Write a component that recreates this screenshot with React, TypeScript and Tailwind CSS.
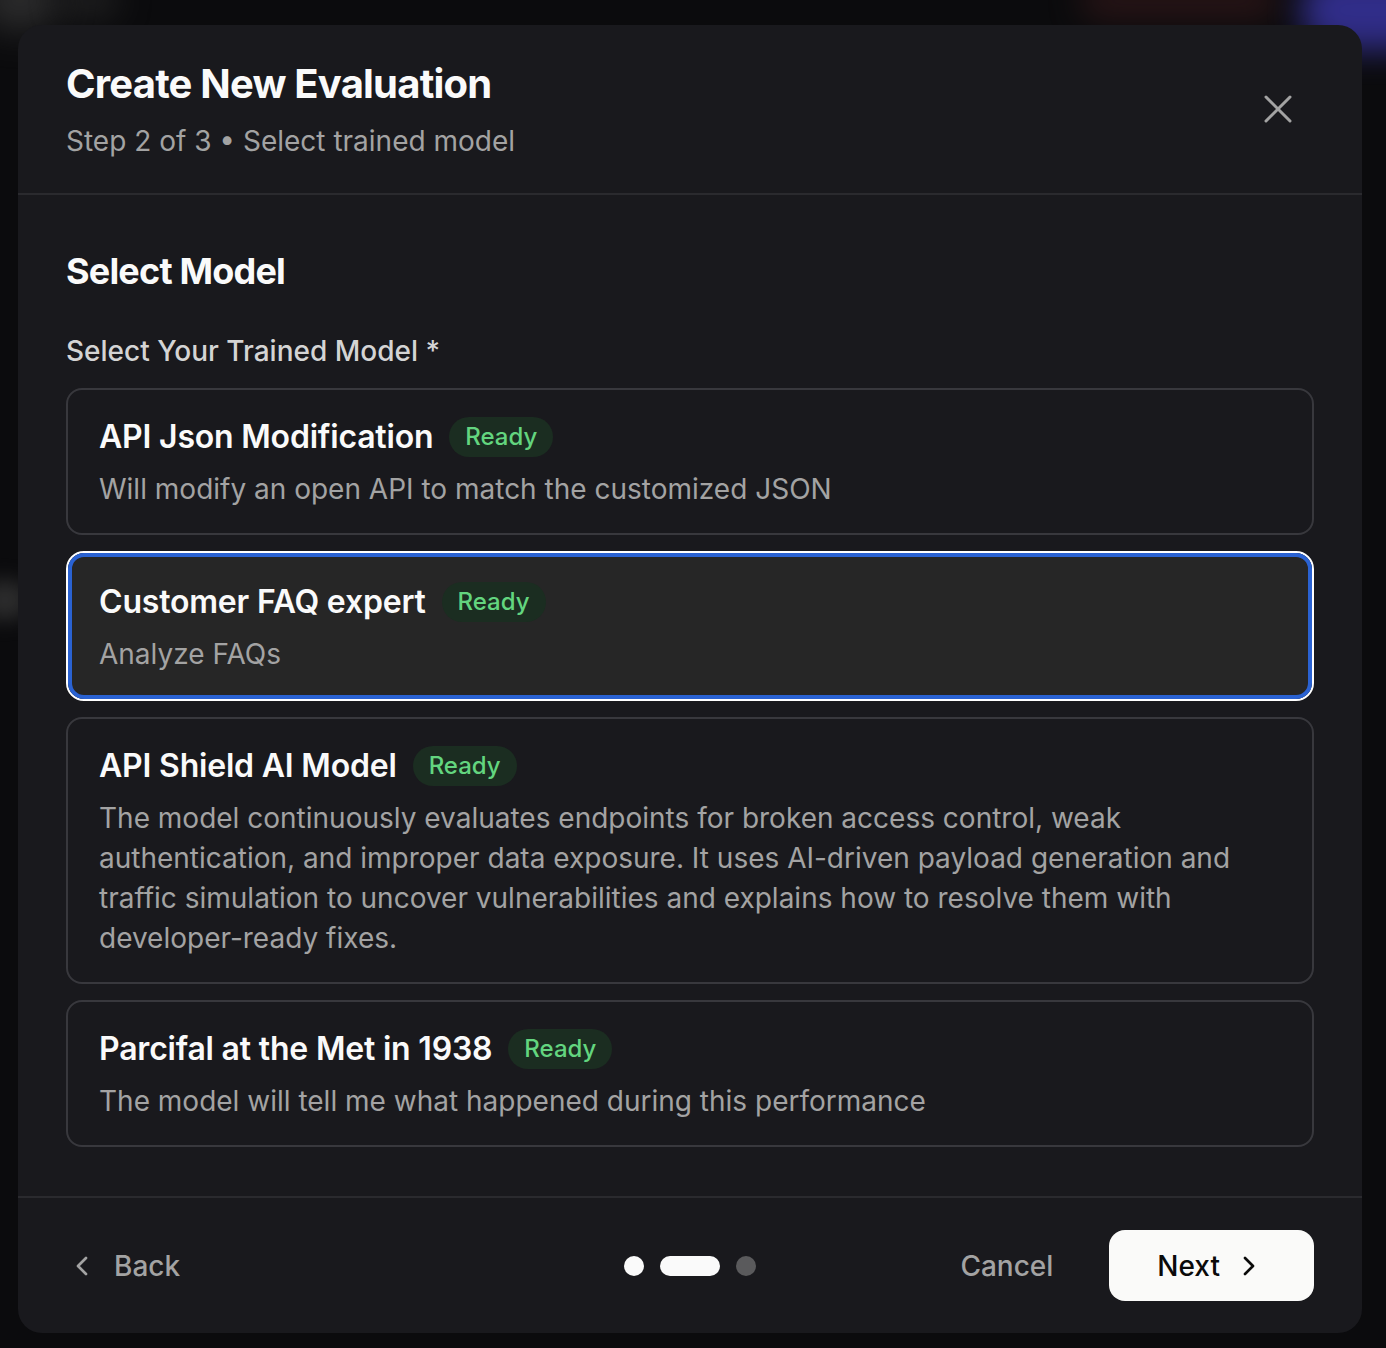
import React from "react";
import { X, ChevronLeft, ChevronRight } from "lucide-react";

type Model = { name: string; desc: string; selected?: boolean };

const models: Model[] = [
  { name: "API Json Modification", desc: "Will modify an open API to match the customized JSON" },
  { name: "Customer FAQ expert", desc: "Analyze FAQs", selected: true },
  {
    name: "API Shield AI Model",
    desc: "The model continuously evaluates endpoints for broken access control, weak authentication, and improper data exposure. It uses AI-driven payload generation and traffic simulation to uncover vulnerabilities and explains how to resolve them with developer-ready fixes.",
  },
  { name: "Parcifal at the Met in 1938", desc: "The model will tell me what happened during this performance" },
];

function CardContent({ m }: { m: Model }) {
  return (
    <>
      <div className="flex items-center gap-[16px]">
        <span className="text-[32px] leading-[40px] font-semibold text-[#fafafa] tracking-[-0.2px]">{m.name}</span>
        <span className="rounded-full bg-[#1b2d21] px-[16px] text-[24px] leading-[40px] font-medium text-[#63d57f]">
          Ready
        </span>
      </div>
      <p className="mt-[12px] text-[28px] leading-[40px] text-[#a3a3a3]">{m.desc}</p>
    </>
  );
}

function ModelCard({ m }: { m: Model }) {
  if (m.selected) {
    return (
      <div className="rounded-[18px] border-[2px] border-[#ffffff]">
        <div className="rounded-[16px] border-[4px] border-[#2a62d2] bg-[#262626] px-[27px] pt-[25px] pb-[21px]">
          <CardContent m={m} />
        </div>
      </div>
    );
  }
  return (
    <div className="rounded-[16px] border-[2px] border-[#38383d] px-[31px] pt-[27px] pb-[24px]">
      <CardContent m={m} />
    </div>
  );
}

export default function App() {
  return (
    <div
      className="relative w-[1386px] h-[1348px] overflow-hidden bg-[#0b0b0d]"
      style={{ fontFamily: "Inter, 'Noto Sans', sans-serif" }}
    >
      {/* blurred background remnants */}
      <div className="absolute -left-[20px] -top-[30px] h-[60px] w-[80px] rounded-full bg-[#3a3a3a] blur-[18px] opacity-70" />
      <div className="absolute left-[60px] -top-[20px] h-[40px] w-[60px] rounded-full bg-[#2a2a2a] blur-[16px] opacity-60" />
      <div className="absolute left-[1080px] -top-[20px] h-[40px] w-[200px] rounded-full bg-[#3a1a1c] blur-[16px] opacity-60" />
      <div className="absolute left-[1300px] -top-[30px] h-[80px] w-[140px] rounded-full bg-[#3a36a8] blur-[16px] opacity-80" />
      <div className="absolute -left-[20px] top-[580px] h-[40px] w-[50px] rounded-full bg-[#3a3a3a] blur-[10px] opacity-70" />

      <div className="relative ml-[18px] mt-[25px] w-[1344px] rounded-[24px] bg-[#19191d] flex flex-col">
        {/* Header */}
        <div className="flex items-center justify-between border-b-[2px] border-[#2a2a2e] pl-[48px] pr-[48px] pt-[35px] pb-[32px]">
          <div>
            <h1 className="text-[40px] leading-[48px] font-bold tracking-[-0.8px] text-[#fafafa]">
              Create New Evaluation
            </h1>
            <p className="mt-[13px] text-[28px] leading-[40px] text-[#a3a3a3]">Step 2 of 3 • Select trained model</p>
          </div>
          <button className="-mt-[4px] p-[12px] text-[#a3a3a3]">
            <X size={48} strokeWidth={1.5} />
          </button>
        </div>

        {/* Body */}
        <div className="px-[48px] pt-[52px] pb-[49px]">
          <h2 className="text-[36px] leading-[48px] font-bold tracking-[-0.8px] text-[#fafafa]">Select Model</h2>
          <p className="mt-[36px] text-[28px] leading-[40px] font-medium text-[#d4d4d4]">
            Select Your Trained Model *
          </p>
          <div className="mt-[17px] flex flex-col gap-[16px]">
            {models.map((m) => (
              <ModelCard key={m.name} m={m} />
            ))}
          </div>
        </div>

        {/* Footer */}
        <div className="grid grid-cols-3 items-center border-t-[2px] border-[#2a2a2e] px-[48px] pt-[32px] pb-[32px]">
          <div className="flex items-center">
            <button className="flex items-center gap-[16px] text-[#a3a3a3]">
              <ChevronLeft size={32} strokeWidth={2} />
              <span className="text-[28px] leading-[40px] font-medium">Back</span>
            </button>
          </div>
          <div className="flex items-center justify-center gap-[16px]">
            <span className="h-[20px] w-[20px] rounded-full bg-[#fafafa]" />
            <span className="h-[20px] w-[60px] rounded-full bg-[#fafafa]" />
            <span className="h-[20px] w-[20px] rounded-full bg-[#5a5a5c]" />
          </div>
          <div className="flex items-center justify-end gap-[32px]">
            <button className="px-[24px] text-[28px] leading-[40px] font-medium text-[#a3a3a3]">Cancel</button>
            <button className="flex h-[71px] items-center gap-[13px] rounded-[16px] bg-[#fafaf9] pl-[48px] pr-[49px] text-[#0a0a0a]">
              <span className="text-[28px] leading-[40px] font-medium">Next</span>
              <ChevronRight size={32} strokeWidth={2} />
            </button>
          </div>
        </div>
      </div>
    </div>
  );
}
